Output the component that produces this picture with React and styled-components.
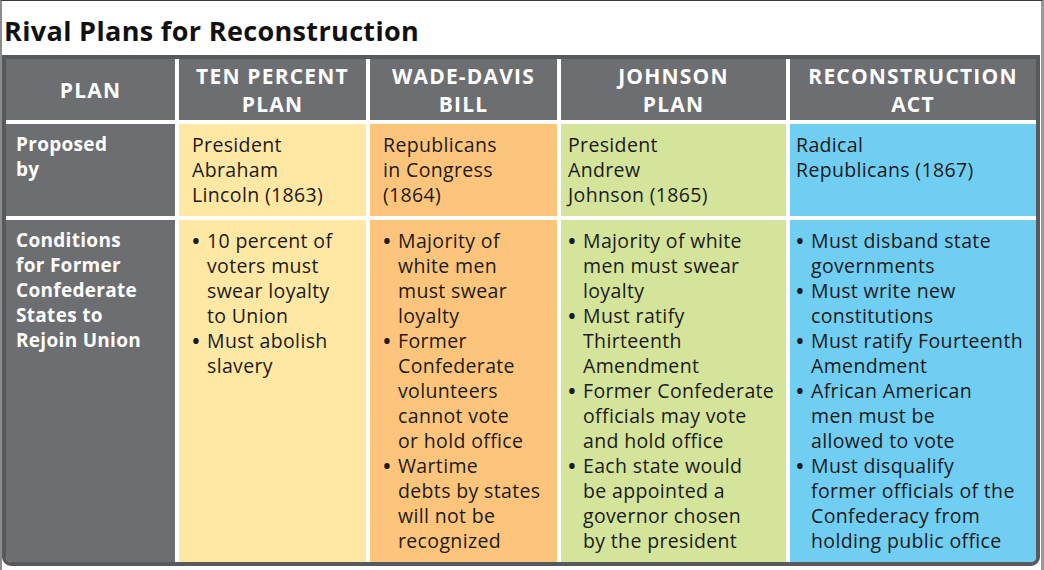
import styled, { createGlobalStyle } from "styled-components";

const GlobalStyle = createGlobalStyle`
  html, body { margin: 0; padding: 0; background: #ffffff; }
  body { font-family: "Open Sans", "Liberation Sans", sans-serif; }
`;

const Frame = styled.div`
  width: 1044px;
  height: 570px;
  box-sizing: border-box;
  border-top: 1px solid #3a3a3a;
  border-left: 2px solid #8c8c8c;
  border-right: 3px solid #9a9a9a;
  background: #ffffff;
  overflow: hidden;
`;

const Title = styled.h1`
  margin: 0 0 8px 0;
  padding: 14px 0 0 2px;
  font-size: 27px;
  line-height: 32px;
  font-weight: 700;
  color: #111111;
  letter-spacing: 0.35px;
`;

const Table = styled.div`
  width: 1038px;
  box-sizing: border-box;
  border: 4px solid #58595b;
  border-radius: 0 0 9px 9px;
  background: #ffffff;
  display: grid;
  grid-template-columns: 169px 187px 187px 225px 246px;
  grid-template-rows: 61px 92px 342px;
  gap: 4px;
  overflow: hidden;
`;

const HeadCell = styled.div`
  background: #6d6e71;
  color: #ffffff;
  font-weight: 700;
  font-size: 21px;
  line-height: 28px;
  letter-spacing: 1.2px;
  display: flex;
  align-items: center;
  justify-content: center;
  text-align: center;
  white-space: pre;
`;

const SideCell = styled.div`
  background: #6d6e71;
  color: #ffffff;
  font-weight: 700;
  font-size: 19px;
  line-height: 25px;
  letter-spacing: 0.3px;
  padding: 8px 0 0 10px;
  white-space: pre;
`;

const Cell = styled.div`
  background: ${(p) => p.$bg};
  color: #1d1a1b;
  font-size: 19.5px;
  line-height: 25px;
  letter-spacing: 0.35px;
  padding: 8px 0 0 ${(p) => p.$pad}px;
  white-space: pre;
`;

const Item = styled.div`
  display: flex;
`;

const Dot = styled.span`
  flex: 0 0 16px;
  font-size: 26px;
  line-height: 25px;
  margin-left: -1px;
`;

const plans = [
  {
    name: "TEN PERCENT\nPLAN",
    bg: "#fee8a4",
    pad: 13,
    by: "President\nAbraham\nLincoln (1863)",
    terms: ["10 percent of\nvoters must\nswear loyalty\nto Union", "Must abolish\nslavery"],
  },
  {
    name: "WADE-DAVIS\nBILL",
    bg: "#fdc57c",
    pad: 13,
    by: "Republicans\nin Congress\n(1864)",
    terms: [
      "Majority of\nwhite men\nmust swear\nloyalty",
      "Former\nConfederate\nvolunteers\ncannot vote\nor hold office",
      "Wartime\ndebts by states\nwill not be\nrecognized",
    ],
  },
  {
    name: "JOHNSON\nPLAN",
    bg: "#d4e49b",
    pad: 7,
    by: "President\nAndrew\nJohnson (1865)",
    terms: [
      "Majority of white\nmen must swear\nloyalty",
      "Must ratify\nThirteenth\nAmendment",
      "Former Confederate\nofficials may vote\nand hold office",
      "Each state would\nbe appointed a\ngovernor chosen\nby the president",
    ],
  },
  {
    name: "RECONSTRUCTION\nACT",
    bg: "#6fcef2",
    pad: 6,
    by: "Radical\nRepublicans (1867)",
    terms: [
      "Must disband state\ngovernments",
      "Must write new\nconstitutions",
      "Must ratify Fourteenth\nAmendment",
      "African American\nmen must be\nallowed to vote",
      "Must disqualify\nformer officials of the\nConfederacy from\nholding public office",
    ],
  },
];

export default function App() {
  return (
    <Frame>
      <GlobalStyle />
      <Title>Rival Plans for Reconstruction</Title>
      <Table>
        <HeadCell>PLAN</HeadCell>
        {plans.map((p) => (
          <HeadCell key={p.name}>{p.name}</HeadCell>
        ))}

        <SideCell>{"Proposed\nby"}</SideCell>
        {plans.map((p) => (
          <Cell key={p.name} $bg={p.bg} $pad={p.pad}>
            {p.by}
          </Cell>
        ))}

        <SideCell>{"Conditions\nfor Former\nConfederate\nStates to\nRejoin Union"}</SideCell>
        {plans.map((p) => (
          <Cell key={p.name} $bg={p.bg} $pad={p.pad}>
            {p.terms.map((t) => (
              <Item key={t}>
                <Dot>•</Dot>
                <span>{t}</span>
              </Item>
            ))}
          </Cell>
        ))}
      </Table>
    </Frame>
  );
}
